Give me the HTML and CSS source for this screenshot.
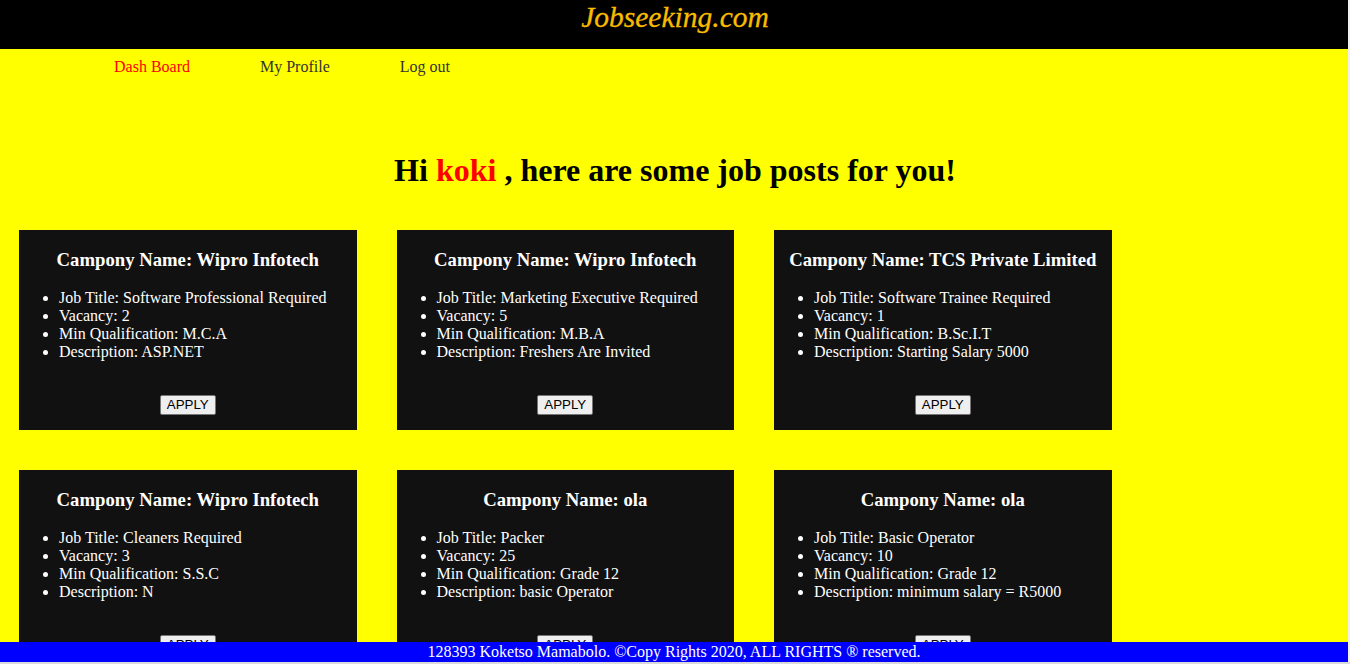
FILE: index.html
```html
<!DOCTYPE html>
<html lang="en">
<head>
<meta charset="utf-8">
<title>Jobseeking.com</title>
<link rel="stylesheet" href="styles.css">
</head>
<body>
<header class="site-header">
  <h1 class="brand">Jobseeking.com</h1>
</header>
<nav class="main-nav">
  <a class="nav-link active" href="#">Dash Board</a>
  <a class="nav-link" href="#">My Profile</a>
  <a class="nav-link" href="#">Log out</a>
</nav>
<main class="content">
  <h1 class="greeting">Hi <span class="user">koki</span> , here are some job posts for you!</h1>
  <section class="jobs">
    <article class="job-card">
      <h3 class="job-company">Campony Name: Wipro Infotech</h3>
      <ul class="job-details">
        <li>Job Title: Software Professional Required</li>
        <li>Vacancy: 2</li>
        <li>Min Qualification: M.C.A</li>
        <li>Description: ASP.NET</li>
      </ul>
      <div class="job-actions"><button class="apply-btn">APPLY</button></div>
    </article>
    <article class="job-card">
      <h3 class="job-company">Campony Name: Wipro Infotech</h3>
      <ul class="job-details">
        <li>Job Title: Marketing Executive Required</li>
        <li>Vacancy: 5</li>
        <li>Min Qualification: M.B.A</li>
        <li>Description: Freshers Are Invited</li>
      </ul>
      <div class="job-actions"><button class="apply-btn">APPLY</button></div>
    </article>
    <article class="job-card">
      <h3 class="job-company">Campony Name: TCS Private Limited</h3>
      <ul class="job-details">
        <li>Job Title: Software Trainee Required</li>
        <li>Vacancy: 1</li>
        <li>Min Qualification: B.Sc.I.T</li>
        <li>Description: Starting Salary 5000</li>
      </ul>
      <div class="job-actions"><button class="apply-btn">APPLY</button></div>
    </article>
    <article class="job-card">
      <h3 class="job-company">Campony Name: Wipro Infotech</h3>
      <ul class="job-details">
        <li>Job Title: Cleaners Required</li>
        <li>Vacancy: 3</li>
        <li>Min Qualification: S.S.C</li>
        <li>Description: N</li>
      </ul>
      <div class="job-actions"><button class="apply-btn">APPLY</button></div>
    </article>
    <article class="job-card">
      <h3 class="job-company">Campony Name: ola</h3>
      <ul class="job-details">
        <li>Job Title: Packer</li>
        <li>Vacancy: 25</li>
        <li>Min Qualification: Grade 12</li>
        <li>Description: basic Operator</li>
      </ul>
      <div class="job-actions"><button class="apply-btn">APPLY</button></div>
    </article>
    <article class="job-card">
      <h3 class="job-company">Campony Name: ola</h3>
      <ul class="job-details">
        <li>Job Title: Basic Operator</li>
        <li>Vacancy: 10</li>
        <li>Min Qualification: Grade 12</li>
        <li>Description: minimum salary = R5000</li>
      </ul>
      <div class="job-actions"><button class="apply-btn">APPLY</button></div>
    </article>
  </section>
</main>
<footer class="site-footer">128393 Koketso Mamabolo. ©Copy Rights 2020, ALL RIGHTS ® reserved.</footer>
<div class="scroll-v"></div>
<div class="scroll-h"></div>
</body>
</html>
```

FILE: styles.css
```css
html {
  overflow: hidden;
}

body {
  margin: 0;
  background: #ffff00;
  font-family: "Liberation Serif", "Times New Roman", serif;
  font-size: 16px;
}

.site-header {
  background: #000;
  height: 49px;
}

.brand {
  margin: 0;
  text-align: center;
  font-size: 29.5px;
  font-weight: normal;
  font-style: italic;
  line-height: 34px;
  color: #f7bc00;
  -webkit-text-stroke: 0.3px #f7bc00;
}

.main-nav {
  display: flex;
  gap: 70px;
  padding: 9px 0 9px 114px;
}

.nav-link {
  color: #333;
  text-decoration: none;
}

.nav-link.active {
  color: #ff0000;
}

.greeting {
  margin: 67px 0 41px;
  text-align: center;
  font-size: 32px;
  font-weight: bold;
  color: #000;
}

.user {
  color: #ff0000;
}

.jobs {
  display: grid;
  grid-template-columns: repeat(3, 337.5px);
  column-gap: 40px;
  row-gap: 40px;
  padding-left: 19px;
  padding-bottom: 40px;
}

.job-card {
  display: flow-root;
  height: 200px;
  background: #111;
  color: #fff;
}

.job-company {
  margin: 18.72px 0;
  font-size: 18.72px;
  text-align: center;
}

.job-details {
  margin: 16px 0;
  padding-left: 40px;
  line-height: 18px;
}

.job-actions {
  display: flex;
  justify-content: center;
  padding-top: 18px;
}

.apply-btn {
  font-family: "Liberation Sans", Arial, sans-serif;
  font-size: 13.33px;
  line-height: 16px;
  padding: 1px 6px;
  border: 1px solid #767676;
  border-radius: 2px;
  background: #efefef;
  color: #000;
}

.site-footer {
  position: fixed;
  left: 0;
  right: 2px;
  bottom: 2px;
  height: 20px;
  line-height: 20px;
  background: #0000ff;
  color: #fff;
  text-align: center;
}

.scroll-v {
  position: fixed;
  top: 0;
  right: 0;
  bottom: 0;
  width: 2px;
  background: #f1f1f1;
}

.scroll-h {
  position: fixed;
  left: 0;
  right: 0;
  bottom: 0;
  height: 2px;
  background: #dadada;
}
```
